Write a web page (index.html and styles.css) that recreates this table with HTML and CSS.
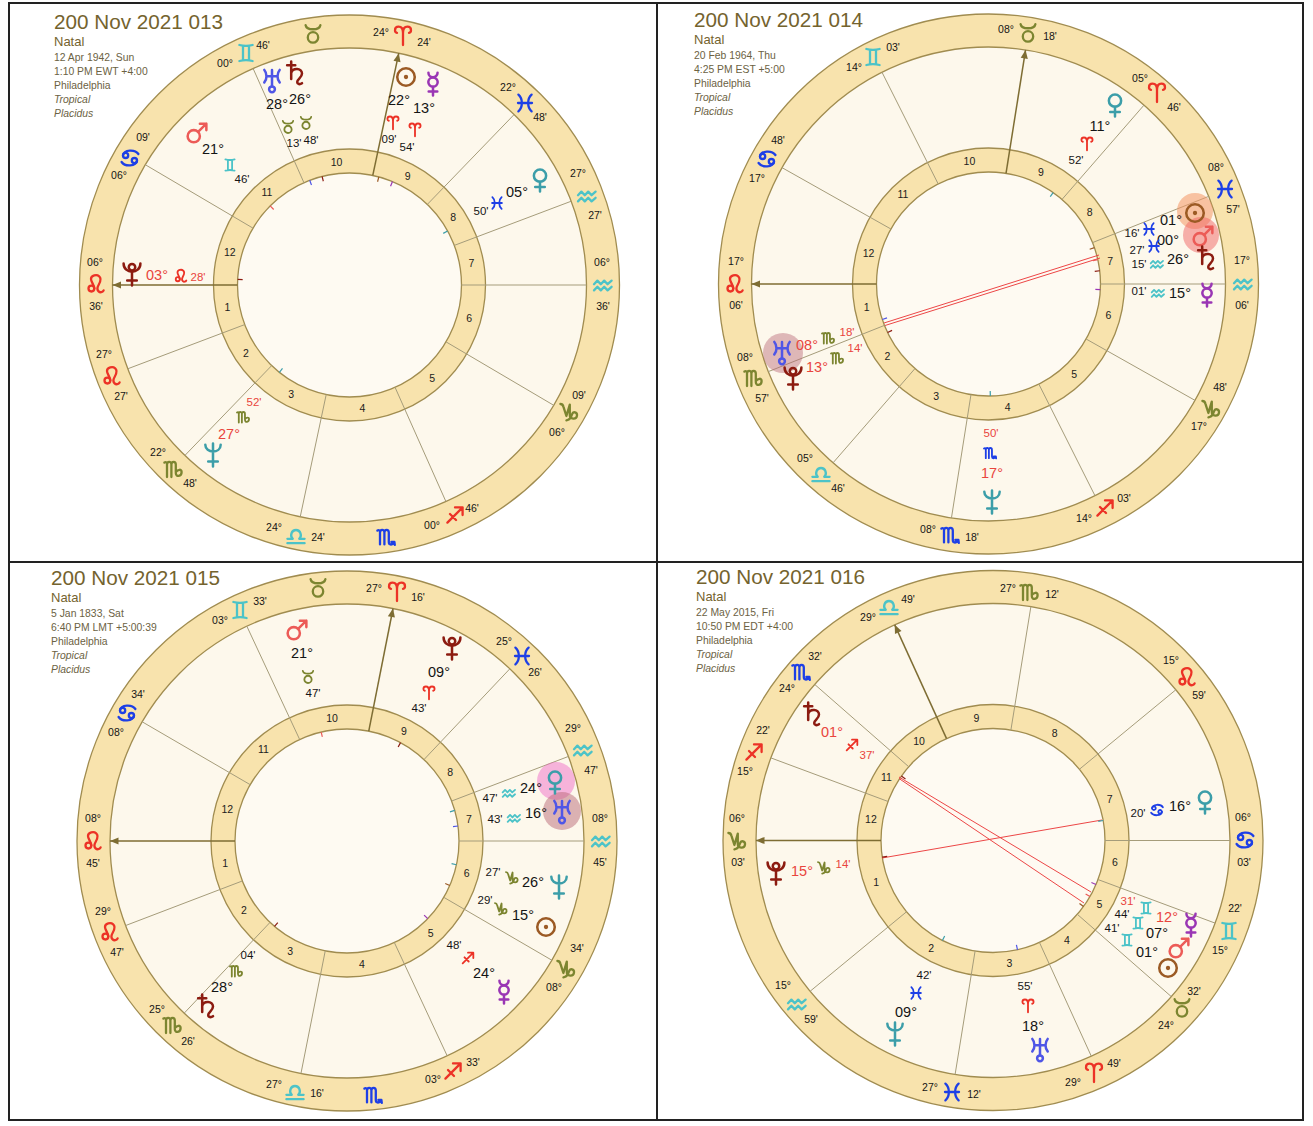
FILE: index.html
```html
<!DOCTYPE html>
<html lang="en">
<head>
<meta charset="utf-8">
<title>Natal charts</title>
<link rel="stylesheet" href="styles.css">
</head>
<body>
<main class="grid">
  <section class="cell c1">
    <svg class="wheel" id="ch1"></svg>
    <div class="info">
      <div class="title">200 Nov 2021 013</div>
      <div class="kind">Natal</div>
      <div class="meta">12 Apr 1942, Sun</div>
      <div class="meta">1:10 PM EWT +4:00</div>
      <div class="meta">Philadelphia</div>
      <div class="meta it">Tropical</div>
      <div class="meta it">Placidus</div>
    </div>
  </section>
  <section class="cell c2">
    <svg class="wheel" id="ch2"></svg>
    <div class="info">
      <div class="title">200 Nov 2021 014</div>
      <div class="kind">Natal</div>
      <div class="meta">20 Feb 1964, Thu</div>
      <div class="meta">4:25 PM EST +5:00</div>
      <div class="meta">Philadelphia</div>
      <div class="meta it">Tropical</div>
      <div class="meta it">Placidus</div>
    </div>
  </section>
  <section class="cell c3">
    <svg class="wheel" id="ch3"></svg>
    <div class="info">
      <div class="title">200 Nov 2021 015</div>
      <div class="kind">Natal</div>
      <div class="meta">5 Jan 1833, Sat</div>
      <div class="meta">6:40 PM LMT +5:00:39</div>
      <div class="meta">Philadelphia</div>
      <div class="meta it">Tropical</div>
      <div class="meta it">Placidus</div>
    </div>
  </section>
  <section class="cell c4">
    <svg class="wheel" id="ch4"></svg>
    <div class="info">
      <div class="title">200 Nov 2021 016</div>
      <div class="kind">Natal</div>
      <div class="meta">22 May 2015, Fri</div>
      <div class="meta">10:50 PM EDT +4:00</div>
      <div class="meta">Philadelphia</div>
      <div class="meta it">Tropical</div>
      <div class="meta it">Placidus</div>
    </div>
  </section>
</main>
<svg class="defs" aria-hidden="true">
  <symbol id="g-sun" viewBox="-10 -10 20 20"><g class="gl"><circle r="7.3"/><circle class="dot" r="1.8"/></g></symbol>
  <symbol id="g-mer" viewBox="-10 -10 20 20"><g class="gl"><path d="M-3.8 -9.4 A3.8 3.8 0 0 0 3.8 -9.4"/><circle cy="-1.6" r="3.9"/><path d="M0 2.3 V9.6 M-3.6 6.2 H3.6"/></g></symbol>
  <symbol id="g-ven" viewBox="-10 -10 20 20"><g class="gl"><circle cy="-3.6" r="5.1"/><path d="M0 1.5 V9.6 M-4 5.8 H4"/></g></symbol>
  <symbol id="g-mar" viewBox="-10 -10 20 20"><g class="gl"><circle cx="-2.7" cy="2.7" r="5.1"/><path d="M0.9 -0.9 L7.8 -7.8 M2.4 -7.8 H7.8 V-2.4"/></g></symbol>
  <symbol id="g-sat" viewBox="-10 -10 20 20"><g class="gl"><path d="M-4 -9.6 V5 M-7.4 -6.4 H-0.6 M-4 0 C-3 -4.5 5 -4.5 5 0.5 C5 4 1 5 1 7.4 C1 9.4 3.2 9.8 5 8.5"/></g></symbol>
  <symbol id="g-ura" viewBox="-10 -10 20 20"><g class="gl"><path d="M-6.4 -9.2 C-4 -6.4 -4 -1.6 -6.4 1.2 M6.4 -9.2 C4 -6.4 4 -1.6 6.4 1.2 M-4.6 -4 H4.6 M0 -9.2 V4.4"/><circle cy="6.9" r="2.4"/></g></symbol>
  <symbol id="g-nep" viewBox="-10 -10 20 20"><g class="gl"><path d="M-6.4 -8.6 C-6.4 -1 6.4 -1 6.4 -8.6 M0 -9.6 V9.6 M-4 5.4 H4"/></g></symbol>
  <symbol id="g-plu" viewBox="-10 -10 20 20"><g class="gl"><circle cy="-5.7" r="2.7"/><path d="M-7 -8.8 C-7 0.4 7 0.4 7 -8.8 M0 -2 V9.6 M-4 5.4 H4"/></g></symbol>
  <symbol id="g-ari" viewBox="-10 -10 20 20"><g class="gl"><path d="M0 9 V-3 C0 -8 -2 -9.3 -4.4 -9.3 C-6.8 -9.3 -8 -7.6 -8 -5.8 C-8 -4.4 -7.2 -3.4 -6 -3.2 M0 -3 C0 -8 2 -9.3 4.4 -9.3 C6.8 -9.3 8 -7.6 8 -5.8 C8 -4.4 7.2 -3.4 6 -3.2"/></g></symbol>
  <symbol id="g-tau" viewBox="-10 -10 20 20"><g class="gl"><circle cy="3.4" r="5.2"/><path d="M-7.4 -8.8 C-6.4 -3.4 6.4 -3.4 7.4 -8.8"/></g></symbol>
  <symbol id="g-gem" viewBox="-10 -10 20 20"><g class="gl"><path d="M-6.6 -8 C-2 -6.8 2 -6.8 6.6 -8 M-6.6 8 C-2 6.8 2 6.8 6.6 8 M-3 -7 V7 M3 -7 V7"/></g></symbol>
  <symbol id="g-can" viewBox="-10 -10 20 20"><g class="gl"><circle cx="-4.4" cy="-2.6" r="2.6"/><circle cx="4.4" cy="2.6" r="2.6"/><path d="M-7 -2.6 C-6 -8.6 5 -9 8.4 -4 M7 2.6 C6 8.6 -5 9 -8.4 4"/></g></symbol>
  <symbol id="g-leo" viewBox="-10 -10 20 20"><g class="gl"><circle cx="-4.6" cy="4.6" r="2.9"/><path d="M-1.7 4.6 C-1.7 1 -5 -2 -5 -5 C-5 -9 1 -9.8 3 -7.8 C5.4 -5.8 4.4 -2 2.6 1 C1.2 3.4 1.2 6 2.6 7.4 C4 8.8 6.6 8.4 7.6 6.4"/></g></symbol>
  <symbol id="g-vir" viewBox="-10 -10 20 20"><g class="gl"><path d="M-8.6 -6.4 C-7 -7.4 -6 -6.4 -6 -5 V8 M-6 -4.4 C-6 -8 -1.6 -8 -1.6 -4.4 V8 M-1.6 -4.4 C-1.6 -8 2.8 -8 2.8 -4.4 V4 C2.8 8.4 8.6 7.6 8.6 3 C8.6 0 5 0 2.8 3.2"/></g></symbol>
  <symbol id="g-lib" viewBox="-10 -10 20 20"><g class="gl"><path d="M-8.6 7.2 H8.6 M-8.6 2.8 H-3.2 C-6.4 0 -4.6 -6 0 -6 C4.6 -6 6.4 0 3.2 2.8 H8.6"/></g></symbol>
  <symbol id="g-sco" viewBox="-10 -10 20 20"><g class="gl"><path d="M-8.6 -6.4 C-7 -7.4 -6 -6.4 -6 -5 V7.4 M-6 -4.4 C-6 -8 -1.6 -8 -1.6 -4.4 V7.4 M-1.6 -4.4 C-1.6 -8 2.8 -8 2.8 -4.4 V5 C2.8 8.2 6.6 8.4 8.2 5.2 M5.4 5 L8.4 4.8 L8.8 7.8"/></g></symbol>
  <symbol id="g-sag" viewBox="-10 -10 20 20"><g class="gl"><path d="M-7.6 7.6 L7.6 -7.6 M0 -7.6 H7.6 V0 M-5 -1 L1 5"/></g></symbol>
  <symbol id="g-cap" viewBox="-10 -10 20 20"><g class="gl"><path d="M-8.6 -7 C-7 -7 -6 -6 -5.6 -4.4 L-2.6 5 L0.8 -6.4 V4 C0.8 8.4 7.4 9 8 4.6 C8.4 1 4 0 3 3.4 C2 6.6 0 9 -2.6 9.4"/></g></symbol>
  <symbol id="g-aqu" viewBox="-10 -10 20 20"><g class="gl"><path d="M-9 -0.8 L-5.6 -4.4 L-2.2 -0.8 L1.2 -4.4 L4.6 -0.8 L8.6 -4.4 M-9 5.4 L-5.6 1.8 L-2.2 5.4 L1.2 1.8 L4.6 5.4 L8.6 1.8"/></g></symbol>
  <symbol id="g-pis" viewBox="-10 -10 20 20"><g class="gl"><path d="M-6.6 -8.4 C-2 -4.4 -2 4.4 -6.6 8.4 M6.6 -8.4 C2 -4.4 2 4.4 6.6 8.4 M-7 0 H7"/></g></symbol>
</svg>
<script src="script.js"></script>
</body>
</html>
```

FILE: styles.css
```css
html, body {
  margin: 0;
  background: #ffffff;
}

body {
  padding: 2px 0 0 8px;
  font-family: "Liberation Sans", Arial, sans-serif;
}

.grid {
  display: grid;
  grid-template-columns: 646px 644px;
  grid-template-rows: 557px 556px;
  gap: 2px;
  padding: 2px;
  background: #222222;
  width: max-content;
}

.cell {
  position: relative;
  background: #ffffff;
  overflow: hidden;
}

.wheel {
  position: absolute;
  inset: 0;
  width: 100%;
  height: 100%;
  display: block;
}

.info {
  position: relative;
  color: #74632e;
}

.c1 .info { padding: 7px 0 0 44px; }
.c2 .info { padding: 5px 0 0 36px; }
.c3 .info { padding: 4px 0 0 41px; }
.c4 .info { padding: 3px 0 0 38px; }

.title {
  font-size: 20.7px;
  line-height: 22px;
  color: #74632e;
}

.kind {
  font-size: 13px;
  line-height: 18px;
  color: #74632e;
}

.meta {
  font-size: 10.4px;
  line-height: 14px;
  color: #6c6243;
}

.meta.it {
  font-style: italic;
}

.defs {
  display: block;
  width: 0;
  height: 0;
  overflow: hidden;
}

.defs symbol {
  overflow: visible;
}

/* chart wheel */
.ring {
  fill: #f8e3ad;
  stroke: #a08c50;
  stroke-width: 1.3;
}

.field {
  fill: #fdf8ec;
  stroke: #a08c50;
  stroke-width: 1.3;
}

.core {
  fill: #fefaf2;
  stroke: #a08c50;
  stroke-width: 1.3;
}

.cusp {
  stroke: #a59c7a;
  stroke-width: 1;
}

.axis {
  stroke: #7e6d33;
  stroke-width: 1.5;
}

.arrow {
  fill: #7e6d33;
}

.asp {
  stroke: #ec4646;
  stroke-width: 1;
}

.tick {
  stroke-width: 1.2;
}

.wheel text {
  font-family: "Liberation Sans", Arial, sans-serif;
  text-anchor: middle;
  dominant-baseline: central;
}

.hn { font-size: 10.5px; fill: #1c1c1c; }
.rl { font-size: 10.5px; fill: #151515; }
.deg { font-size: 14.5px; fill: #141414; }
.degr { font-size: 14.5px; fill: #e9453d; }
.min { font-size: 11.5px; fill: #151515; }
.minr { font-size: 11.5px; fill: #e9453d; }

.gl {
  fill: none;
  stroke: currentColor;
  stroke-linecap: round;
  stroke-linejoin: round;
}

.gl .dot {
  fill: currentColor;
  stroke: none;
}

.gp { stroke-width: 2.1; }
.gr { stroke-width: 2.3; }
.gs { stroke-width: 2.6; }
```

FILE: script.js
```js
(function () {
  var NS = 'http://www.w3.org/2000/svg';
  var COL = {
    ari: '#ec3226', leo: '#ec3226', sag: '#ec3226',
    tau: '#7c8530', vir: '#7c8530', cap: '#7c8530',
    gem: '#4cc3c8', lib: '#4cc3c8', aqu: '#4cc3c8',
    can: '#1d3fe6', sco: '#1d3fe6', pis: '#1d3fe6',
    sun: '#9b5a24', mer: '#9a36b4', ven: '#3c9ea9', mar: '#ec5b57',
    sat: '#8c1b10', ura: '#4f56e6', nep: '#3c9ea9', plu: '#8c1b10'
  };
  var SIZE = { p: 24, r: 20, s: 14 };
  var CLS = { r: 'rl', d: 'deg', D: 'degr', m: 'min', M: 'minr' };

  function mk(tag, attrs, parent) {
    var e = document.createElementNS(NS, tag);
    for (var k in attrs) e.setAttribute(k, attrs[k]);
    parent.appendChild(e);
    return e;
  }
  function pt(c, a, r) {
    var t = a * Math.PI / 180;
    return [c.cx + r * Math.cos(t), c.cy - r * Math.sin(t)];
  }
  function glyph(svg, name, x, y, kind) {
    var s = SIZE[kind];
    mk('use', { href: '#g-' + name, x: x - s / 2, y: y - s / 2, width: s, height: s, color: COL[name], 'class': 'g' + kind }, svg);
  }
  function label(svg, txt, x, y, cls) {
    var t = mk('text', { x: x, y: y, 'class': CLS[cls] || cls }, svg);
    t.textContent = txt;
  }

  function draw(c) {
    var svg = document.getElementById(c.id);
    if (!svg) return;
    svg.setAttribute('viewBox', c.vb.join(' '));
    [[270, 'ring'], [237, 'field'], [136, 'ring'], [112, 'core']].forEach(function (d) {
      mk('circle', { cx: c.cx, cy: c.cy, r: d[0], 'class': d[1] }, svg);
    });
    c.cusps.forEach(function (a, i) {
      var p1 = pt(c, a, 112), p2 = pt(c, a, 237);
      var axis = (i === 0 || i === 9);
      mk('line', { x1: p1[0], y1: p1[1], x2: p2[0], y2: p2[1], 'class': axis ? 'axis' : 'cusp' }, svg);
      if (axis) {
        var b = pt(c, a, 228.5), t = a * Math.PI / 180;
        var px = Math.sin(t) * 3.6, py = Math.cos(t) * 3.6;
        mk('polygon', { points: [p2[0], p2[1], b[0] + px, b[1] + py, b[0] - px, b[1] - py].join(' '), 'class': 'arrow' }, svg);
      }
    });
    c.cusps.forEach(function (a, i) {
      var a2 = i < 11 ? c.cusps[i + 1] : c.cusps[0] + 360;
      var m = pt(c, (a + a2) / 2, 124);
      label(svg, String(i + 1), m[0], m[1], 'hn');
    });
    (c.asp || []).forEach(function (l) {
      mk('line', { x1: l[0], y1: l[1], x2: l[2], y2: l[3], 'class': 'asp' }, svg);
    });
    c.items.forEach(function (it) {
      if (it[0].charAt(0) === '@') {
        var n = it[0].slice(1);
        var a = Math.atan2(c.cy - it[2], it[1] - c.cx) * 180 / Math.PI;
        var q1 = pt(c, a, 107), q2 = pt(c, a, 112);
        mk('line', { x1: q1[0], y1: q1[1], x2: q2[0], y2: q2[1], 'class': 'tick', stroke: COL[n] }, svg);
      }
    });
    (c.hl || []).forEach(function (h) {
      mk('circle', { cx: h[0], cy: h[1], r: h[2], fill: h[3] }, svg);
    });
    c.items.forEach(function (it) {
      var k = it[0].charAt(0);
      if (k === '@') glyph(svg, it[0].slice(1), it[1], it[2], 'p');
      else if (k === '#') glyph(svg, it[0].slice(1), it[1], it[2], 'r');
      else if (k === '%') glyph(svg, it[0].slice(1), it[1], it[2], 's');
      else label(svg, it[0], it[1], it[2], it[3]);
    });
  }

  var charts = [
    {
      id: 'ch1', vb: [10, 4, 646, 557], cx: 349.5, cy: 285,
      cusps: [180, 200.7, 226, 258, 294, 329.5, 360, 380.7, 406, 438, 474, 509.5],
      items: [
        ['#tau', 313, 34],
        ['24°', 381, 32, 'r'], ['#ari', 403, 36], ["24'", 424, 42, 'r'],
        ["46'", 263, 45, 'r'], ['#gem', 246, 53], ['00°', 225, 63, 'r'],
        ["09'", 143, 137, 'r'], ['#can', 130, 158], ['06°', 119, 175, 'r'],
        ['06°', 95, 262, 'r'], ['#leo', 96, 284], ["36'", 96, 306, 'r'],
        ['27°', 104, 354, 'r'], ['#leo', 112, 376], ["27'", 121, 396, 'r'],
        ['22°', 158, 452, 'r'], ['#vir', 173, 469], ["48'", 190, 483, 'r'],
        ['24°', 274, 527, 'r'], ['#lib', 296, 536], ["24'", 318, 537, 'r'],
        ['#sco', 386, 537],
        ['00°', 432, 525, 'r'], ['#sag', 455, 515], ["46'", 472, 508, 'r'],
        ["09'", 579, 395, 'r'], ['#cap', 569, 411], ['06°', 557, 432, 'r'],
        ['06°', 602, 262, 'r'], ['#aqu', 603, 285], ["36'", 603, 306, 'r'],
        ['27°', 578, 173, 'r'], ['#aqu', 587, 196], ["27'", 595, 215, 'r'],
        ['22°', 508, 87, 'r'], ['#pis', 525, 103], ["48'", 540, 117, 'r'],
        ['@ura', 272, 81], ['@sat', 296, 73], ['28°', 277, 104, 'd'], ['26°', 300, 99, 'd'],
        ['%tau', 288, 127], ['%tau', 306, 123], ["13'", 294, 143, 'm'], ["48'", 311, 140, 'm'],
        ['@mar', 197, 133], ['21°', 213, 149, 'd'], ['%gem', 230, 165], ["46'", 242, 179, 'm'],
        ['@plu', 132, 274], ['03°', 157, 275, 'D'], ['%leo', 181, 276], ["28'", 198, 277, 'M'],
        ['@sun', 406, 77], ['@mer', 433, 84], ['22°', 399, 100, 'd'], ['13°', 424, 108, 'd'],
        ['%ari', 393, 123], ['%ari', 415, 130], ["09'", 389, 139, 'm'], ["54'", 407, 147, 'm'],
        ['@ven', 540, 180], ['05°', 517, 192, 'd'], ['%pis', 497, 203], ["50'", 481, 211, 'm'],
        ['@nep', 213, 455], ['27°', 229, 434, 'D'], ['%vir', 243, 417], ["52'", 254, 402, 'M']
      ]
    },
    {
      id: 'ch2', vb: [658, 4, 644, 557], cx: 988.5, cy: 284,
      cusps: [180, 201.7, 229, 261, 296.7, 330.6, 360, 381.7, 409, 441, 476.7, 510.6],
      asp: [[884, 323, 1099, 255], [885, 325.5, 1100, 258]],
      hl: [[1195, 211, 18, 'rgba(244,150,100,0.55)'], [1201, 235, 18, 'rgba(240,100,100,0.5)'], [783, 353, 20, 'rgba(185,105,120,0.45)']],
      items: [
        ["03'", 893, 47, 'r'], ['#gem', 873, 57], ['14°', 854, 67, 'r'],
        ["48'", 778, 140, 'r'], ['#can', 767, 159], ['17°', 757, 178, 'r'],
        ['17°', 736, 261, 'r'], ['#leo', 735, 284], ["06'", 736, 305, 'r'],
        ['08°', 745, 357, 'r'], ['#vir', 753, 378], ["57'", 762, 398, 'r'],
        ['05°', 805, 458, 'r'], ['#lib', 821, 474], ["46'", 838, 488, 'r'],
        ['08°', 928, 529, 'r'], ['#sco', 950, 535], ["18'", 972, 537, 'r'],
        ['14°', 1084, 518, 'r'], ['#sag', 1105, 508], ["03'", 1124, 498, 'r'],
        ["48'", 1220, 387, 'r'], ['#cap', 1211, 408], ['17°', 1199, 426, 'r'],
        ['17°', 1242, 260, 'r'], ['#aqu', 1243, 284], ["06'", 1242, 305, 'r'],
        ['08°', 1216, 167, 'r'], ['#pis', 1225, 189], ["57'", 1233, 209, 'r'],
        ['05°', 1140, 78, 'r'], ['#ari', 1157, 93], ["46'", 1174, 107, 'r'],
        ['08°', 1006, 29, 'r'], ['#tau', 1028, 33], ["18'", 1050, 36, 'r'],
        ['@ven', 1115, 105], ['11°', 1100, 126, 'd'], ['%ari', 1087, 144], ["52'", 1076, 160, 'm'],
        ['@sun', 1195, 213], ['@mar', 1203, 236], ['@sat', 1207, 258],
        ['01°', 1171, 220, 'd'], ['%pis', 1149, 229], ["16'", 1132, 233, 'm'],
        ['00°', 1168, 240, 'd'], ['%pis', 1154, 246], ["27'", 1137, 250, 'm'],
        ['26°', 1178, 259, 'd'], ['%aqu', 1157, 264], ["15'", 1139, 264, 'm'],
        ['@mer', 1207, 295], ['15°', 1180, 293, 'd'], ['%aqu', 1158, 293], ["01'", 1139, 291, 'm'],
        ['@ura', 782, 353], ['08°', 807, 345, 'D'], ['%vir', 828, 338], ["18'", 847, 332, 'M'],
        ['@plu', 793, 378], ['13°', 817, 367, 'D'], ['%vir', 837, 358], ["14'", 855, 348, 'M'],
        ["50'", 991, 433, 'M'], ['%sco', 990, 453], ['17°', 992, 473, 'D'], ['@nep', 992, 502]
      ]
    },
    {
      id: 'ch3', vb: [10, 563, 646, 556], cx: 347, cy: 841,
      cusps: [180, 200.9, 226.6, 258.8, 295, 329.8, 360, 380.9, 406.6, 438.8, 475, 509.8],
      hl: [[556, 781, 19, 'rgba(240,110,200,0.5)'], [562, 811, 19, 'rgba(185,105,120,0.5)']],
      items: [
        ['#tau', 318, 588],
        ['27°', 374, 588, 'r'], ['#ari', 397, 592], ["16'", 418, 597, 'r'],
        ["33'", 260, 601, 'r'], ['#gem', 240, 610], ['03°', 220, 620, 'r'],
        ["34'", 138, 694, 'r'], ['#can', 127, 713], ['08°', 116, 732, 'r'],
        ['08°', 93, 818, 'r'], ['#leo', 93, 841], ["45'", 93, 863, 'r'],
        ['29°', 103, 911, 'r'], ['#leo', 110, 932], ["47'", 117, 952, 'r'],
        ['25°', 157, 1009, 'r'], ['#vir', 172, 1025], ["26'", 188, 1041, 'r'],
        ['27°', 274, 1084, 'r'], ['#lib', 295, 1092], ["16'", 317, 1093, 'r'],
        ['#sco', 373, 1095],
        ['03°', 433, 1079, 'r'], ['#sag', 453, 1071], ["33'", 473, 1062, 'r'],
        ["34'", 577, 948, 'r'], ['#cap', 566, 968], ['08°', 554, 987, 'r'],
        ['08°', 600, 818, 'r'], ['#aqu', 601, 841], ["45'", 600, 862, 'r'],
        ['29°', 573, 728, 'r'], ['#aqu', 583, 750], ["47'", 591, 770, 'r'],
        ['25°', 504, 641, 'r'], ['#pis', 522, 656], ["26'", 535, 672, 'r'],
        ['@mar', 297, 630], ['21°', 302, 653, 'd'], ['%tau', 308, 677], ["47'", 313, 693, 'm'],
        ['@plu', 452, 648], ['09°', 439, 672, 'd'], ['%ari', 429, 693], ["43'", 419, 708, 'm'],
        ['@ven', 555, 782], ['@ura', 562, 812],
        ['24°', 531, 788, 'd'], ['%aqu', 509, 793], ["47'", 490, 798, 'm'],
        ['16°', 536, 813, 'd'], ['%aqu', 514, 818], ["43'", 495, 819, 'm'],
        ['@nep', 559, 887], ['26°', 533, 882, 'd'], ['%cap', 512, 877], ["27'", 493, 872, 'm'],
        ['@sun', 546, 927], ['15°', 523, 915, 'd'], ['%cap', 501, 908], ["29'", 485, 900, 'm'],
        ['@mer', 504, 992], ['24°', 484, 973, 'd'], ['%sag', 468, 958], ["48'", 454, 945, 'm'],
        ['@sat', 207, 1006], ['28°', 222, 987, 'd'], ['%vir', 236, 971], ["04'", 248, 955, 'm']
      ]
    },
    {
      id: 'ch4', vb: [658, 563, 644, 556], cx: 993, cy: 840.5,
      cusps: [180, 219.5, 260.8, 294.5, 318.8, 339.6, 360, 399.5, 440.8, 474.5, 498.8, 519.6],
      asp: [[882, 858, 1102, 820], [899, 777, 1091, 892], [899, 778.5, 1084, 903]],
      items: [
        ["49'", 908, 599, 'r'], ['#lib', 889, 607], ['29°', 868, 617, 'r'],
        ['27°', 1008, 588, 'r'], ['#vir', 1029, 592], ["12'", 1052, 594, 'r'],
        ['15°', 1171, 660, 'r'], ['#leo', 1187, 677], ["59'", 1199, 695, 'r'],
        ['06°', 1243, 817, 'r'], ['#can', 1245, 840], ["03'", 1244, 862, 'r'],
        ["22'", 1235, 908, 'r'], ['#gem', 1229, 931], ['15°', 1220, 950, 'r'],
        ["32'", 1194, 991, 'r'], ['#tau', 1182, 1008], ['24°', 1166, 1025, 'r'],
        ['29°', 1073, 1082, 'r'], ['#ari', 1094, 1073], ["49'", 1114, 1063, 'r'],
        ['27°', 930, 1087, 'r'], ['#pis', 952, 1092], ["12'", 974, 1094, 'r'],
        ['15°', 783, 985, 'r'], ['#aqu', 797, 1004], ["59'", 811, 1019, 'r'],
        ['06°', 737, 818, 'r'], ['#cap', 737, 840], ["03'", 738, 862, 'r'],
        ["22'", 763, 730, 'r'], ['#sag', 754, 752], ['15°', 745, 771, 'r'],
        ["32'", 815, 656, 'r'], ['#sco', 801, 672], ['24°', 787, 688, 'r'],
        ['@sat', 813, 714], ['01°', 832, 732, 'D'], ['%sag', 852, 745], ["37'", 867, 755, 'M'],
        ['@plu', 776, 873], ['15°', 802, 871, 'D'], ['%cap', 824, 867], ["14'", 843, 864, 'M'],
        ['@ven', 1205, 802], ['16°', 1180, 806, 'd'], ['%can', 1157, 810], ["20'", 1138, 813, 'm'],
        ["31'", 1128, 901, 'M'], ['%gem', 1146, 908], ['12°', 1167, 917, 'D'], ['@mer', 1191, 925],
        ["44'", 1122, 914, 'm'], ['%gem', 1138, 923], ['07°', 1157, 933, 'd'], ['@mar', 1179, 948],
        ["41'", 1112, 928, 'm'], ['%gem', 1127, 940], ['01°', 1147, 952, 'd'], ['@sun', 1168, 968],
        ['@nep', 895, 1034], ['09°', 906, 1012, 'd'], ['%pis', 916, 993], ["42'", 924, 975, 'm'],
        ['@ura', 1040, 1050], ['18°', 1033, 1026, 'd'], ['%ari', 1028, 1006], ["55'", 1025, 986, 'm']
      ]
    }
  ];

  charts.forEach(draw);
})();
```
